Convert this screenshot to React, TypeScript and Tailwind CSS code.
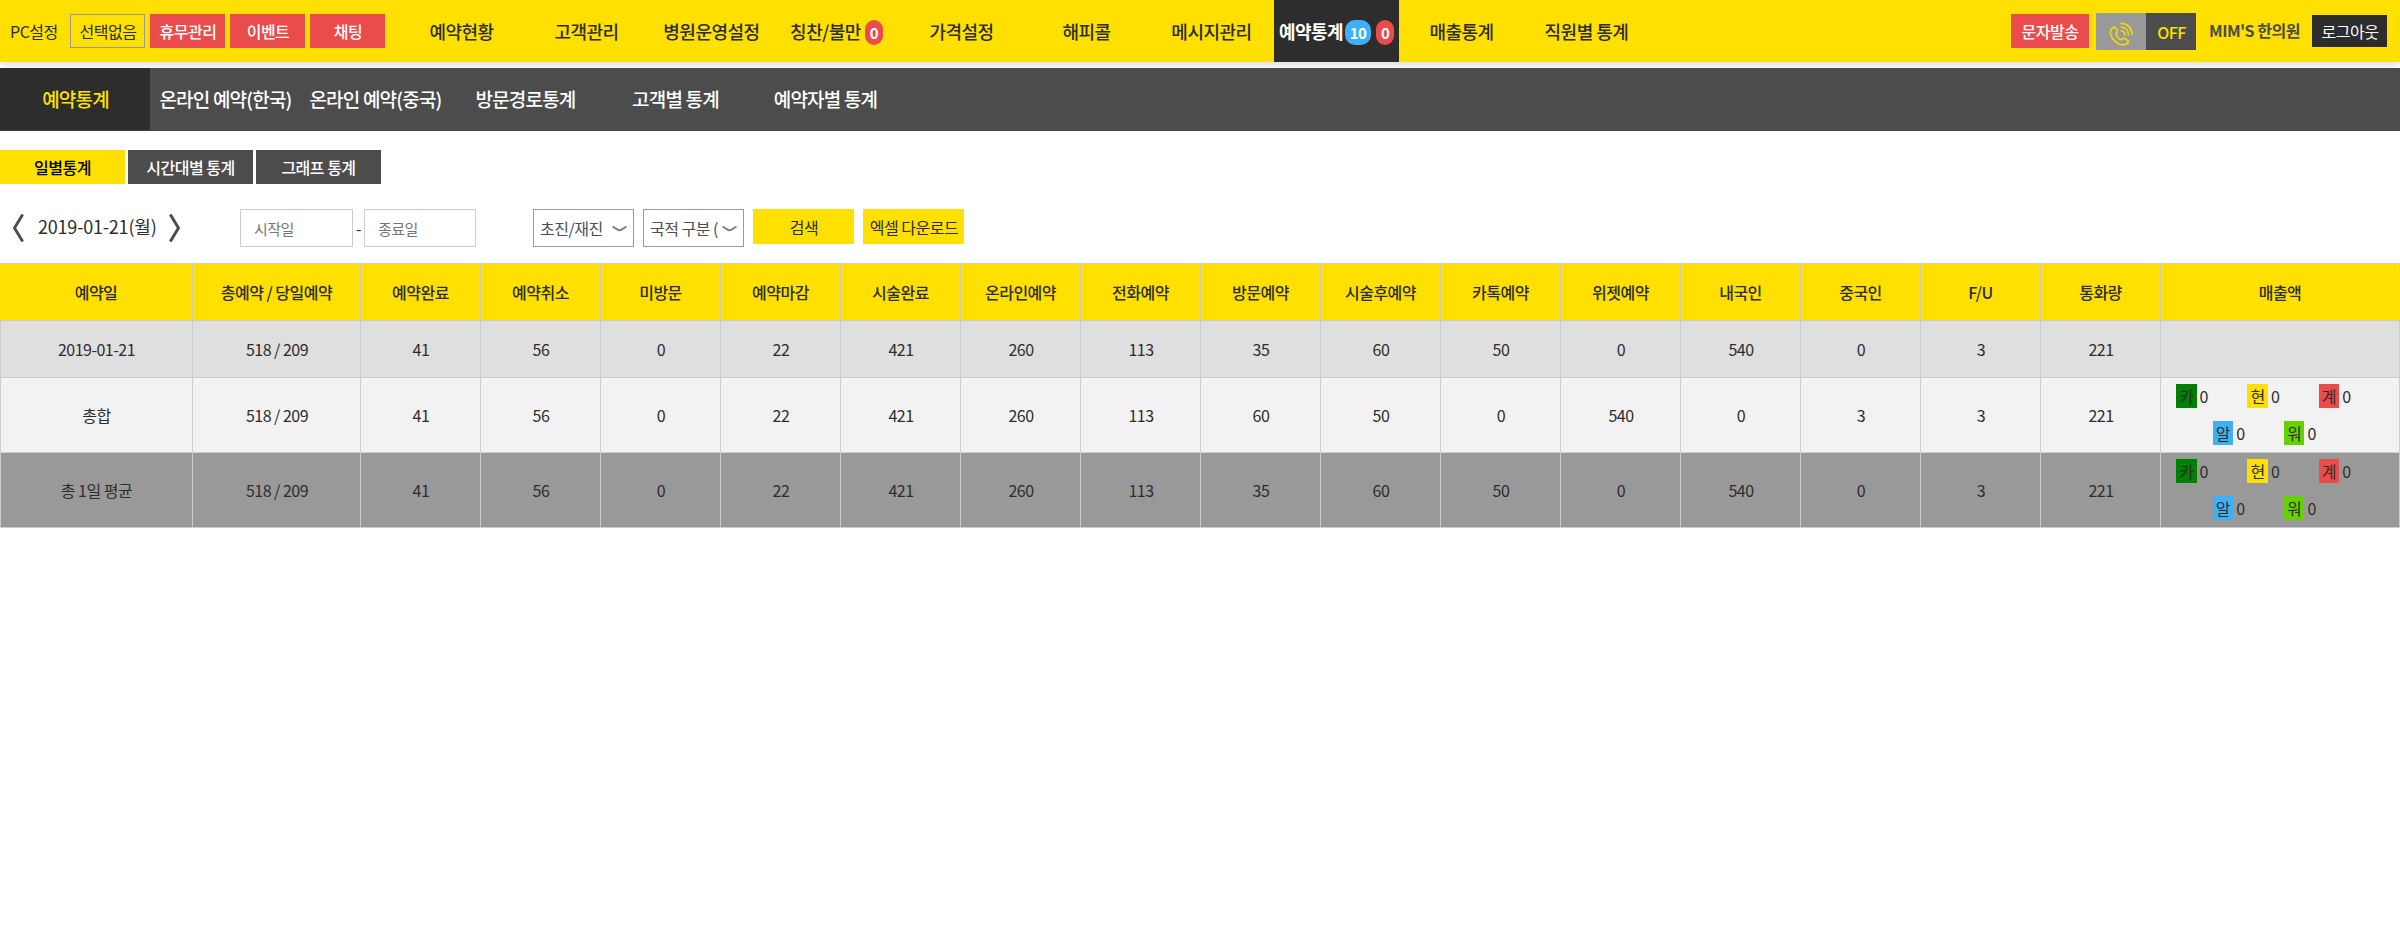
import React from "react";

const navItems: { label: string; badges?: { text: string; tone: "red" | "blue" }[]; active?: boolean }[] = [
  { label: "예약현황" },
  { label: "고객관리" },
  { label: "병원운영설정" },
  { label: "칭찬/불만", badges: [{ text: "0", tone: "red" }] },
  { label: "가격설정" },
  { label: "해피콜" },
  { label: "메시지관리" },
  { label: "예약통계", badges: [{ text: "10", tone: "blue" }, { text: "0", tone: "red" }], active: true },
  { label: "매출통계" },
  { label: "직원별 통계" },
];

const subItems = ["예약통계", "온라인 예약(한국)", "온라인 예약(중국)", "방문경로통계", "고객별 통계", "예약자별 통계"];
const tabs = ["일별통계", "시간대별 통계", "그래프 통계"];

const columns = [
  "예약일", "총예약 / 당일예약", "예약완료", "예약취소", "미방문", "예약마감", "시술완료", "온라인예약", "전화예약",
  "방문예약", "시술후예약", "카톡예약", "위젯예약", "내국인", "중국인", "F/U", "통화량", "매출액",
];

const rows = [
  {
    tone: "h-[57px] bg-[#dfdfdf]",
    sales: false,
    cells: ["2019-01-21", "518 / 209", "41", "56", "0", "22", "421", "260", "113", "35", "60", "50", "0", "540", "0", "3", "221"],
  },
  {
    tone: "h-[75px] bg-[#f2f2f2]",
    sales: true,
    cells: ["총합", "518 / 209", "41", "56", "0", "22", "421", "260", "113", "60", "50", "0", "540", "0", "3", "3", "221"],
  },
  {
    tone: "h-[75px] bg-[#999999]",
    sales: true,
    cells: ["총 1일 평균", "518 / 209", "41", "56", "0", "22", "421", "260", "113", "35", "60", "50", "0", "540", "0", "3", "221"],
  },
];

function Badge({ text, tone }: { text: string; tone: "red" | "blue" }) {
  return (
    <span
      className={
        "flex h-[25px] items-center justify-center rounded-[10px] text-[15px] font-bold text-white " +
        (tone === "red" ? "w-[18px] bg-[#ea4b4b]" : "w-[26px] bg-[#3fb0f5]")
      }
    >
      {text}
    </span>
  );
}

function PhoneIcon() {
  return (
    <svg width="24" height="24" viewBox="0 0 24 24" fill="none" stroke="#f0d60f" strokeWidth="1.700" strokeLinecap="round" strokeLinejoin="round">
      <path d="M4.300 5.500C1 7.500 0.500 11.500 3 15.800C6.200 20.800 11.500 24 16 22.600C18.600 21.800 20.200 20.200 19 18.800C17.800 17.600 16.600 16.700 15.300 16.200C13.700 15.700 13.300 17.900 11.900 17.500C9.700 16.800 7.400 14.200 7.100 12.200C6.900 10.800 8.800 10.700 8.400 9.200C8 7.900 7.200 6.600 6.300 5.700C5.700 5.100 5 5.100 4.300 5.500Z" />
      <path d="M12.300 8.800C14.600 9 15.800 10.400 15.800 12.800" />
      <path d="M12 5.100C16.600 5.100 19.400 8.200 19.400 12.800" />
      <path d="M12 1.400C18.600 1.400 23 6 23 12.500" />
    </svg>
  );
}

function SalesItem({ label, tone }: { label: string; tone: string }) {
  return (
    <div className="flex w-[71.3px] items-center">
      <span className={"flex h-6 w-[20.6px] items-center justify-center " + tone}>{label}</span>
      <span className="ml-[3px]">0</span>
    </div>
  );
}

function Sales() {
  return (
    <div className="flex flex-col gap-[13px] pb-[1px]">
      <div className="flex pl-[15px]">
        <SalesItem label="카" tone="bg-[#008000]" />
        <SalesItem label="현" tone="bg-[#ffe000]" />
        <SalesItem label="계" tone="bg-[#ea4b4b]" />
      </div>
      <div className="flex pl-[51.6px]">
        <SalesItem label="알" tone="bg-[#3fb0f5]" />
        <SalesItem label="워" tone="bg-[#66d100]" />
      </div>
    </div>
  );
}

function SelectBox({ label }: { label: string }) {
  return (
    <button className="flex h-[38px] w-[101px] items-center border border-[#999999] pl-[6px] text-[#495057]">
      <span className="w-[69px] overflow-hidden pb-[1px] text-left whitespace-nowrap">{label}</span>
      <svg className="mt-[1px] ml-[3px]" width="15" height="8" viewBox="0 0 15 8" fill="none" stroke="#808080" strokeWidth="2">
        <path d="M0.500 1.500L5.500 4.600Q7.500 5.800 9.500 4.600L14.500 1.500" />
      </svg>
    </button>
  );
}

export default function App() {
  return (
    <div className="min-h-[942px] w-[2400px] bg-white font-['Noto_Sans_CJK_KR','Noto_Sans',sans-serif] text-[16px] leading-6 tracking-[-0.5px] text-[#2d2d2d]">
      <header className="relative flex h-[62px] items-start bg-[#ffe000] whitespace-nowrap shadow-[0_2px_10px_rgba(0,0,40,0.16)]">
        <div className="flex w-[399px] items-center pt-[14px] pl-[10px]">
          <span className="w-[60px]">PC설정</span>
          <div className="flex gap-[5px]">
            <button className="h-[34px] w-[75px] border border-[#999999] pl-[1px]">선택없음</button>
            <button className="h-[34px] w-[75px] bg-[#ea4b4b] pl-[1px] font-medium text-white">휴무관리</button>
            <button className="h-[34px] w-[75px] bg-[#ea4b4b] pl-[1px] font-medium text-white">이벤트</button>
            <button className="h-[34px] w-[75px] bg-[#ea4b4b] pl-[1px] font-medium text-white">채팅</button>
          </div>
        </div>
        <nav className="flex h-full">
          {navItems.map((item) => (
            <a
              key={item.label}
              className={
                "flex w-[125px] items-center justify-center text-[18px] " +
                (item.active ? "bg-[#2d2d2d] font-bold text-white" : "font-medium")
              }
            >
              {item.label}
              {item.badges && (
                <span className={"mt-[3px] flex gap-[5px] " + (item.active ? "ml-[2px]" : "ml-[4px]")}>
                  {item.badges.map((b) => (
                    <Badge key={b.text} text={b.text} tone={b.tone} />
                  ))}
                </span>
              )}
            </a>
          ))}
        </nav>
        <div className="ml-auto flex h-[62px] items-center pr-[13px]">
          <button className="h-[34px] w-[78px] bg-[#ea4b4b] font-medium text-white">문자발송</button>
          <div className="mt-[1px] ml-[7px] flex h-[37px]">
            <span className="flex w-[50px] items-center justify-center bg-[#999999] pt-1">
              <PhoneIcon />
            </span>
            <span className="flex w-[50px] items-center justify-center bg-[#4c4c4c] pl-[1px] font-medium text-[#ffe000]">OFF</span>
          </div>
          <span className="ml-[13px] w-[103px] pb-[2px] font-bold text-[#4c4c4c]">MIM'S 한의원</span>
          <button className="h-8 w-[75px] bg-[#2d2d2d] pl-[1px] text-white">로그아웃</button>
        </div>
      </header>

      <nav className="relative mt-[6px] flex h-[63px] border-b border-[#444444] bg-[#4c4c4c] text-[19px] font-medium tracking-[-0.8px] whitespace-nowrap text-white">
        {subItems.map((item, i) => (
          <a
            key={item}
            className={"flex w-[150px] items-center justify-center pl-[1px] " + (i === 0 ? "bg-[#2d2d2d] text-[#ffe000]" : "")}
          >
            {item}
          </a>
        ))}
      </nav>

      <div className="mt-[19px] flex gap-[3px] font-medium">
        {tabs.map((tab, i) => (
          <button key={tab} className={"h-[34px] w-[125px] " + (i === 0 ? "bg-[#ffe000] text-black" : "bg-[#4c4c4c] text-white")}>
            {tab}
          </button>
        ))}
      </div>

      <div className="mt-[25px] flex h-[38px] items-start whitespace-nowrap">
        <div className="flex h-full w-[240px] items-center pl-[12px]">
          <svg width="12" height="30" viewBox="0 0 12 30" fill="none" stroke="#4c4c4c" strokeWidth="2.900">
            <path d="M10.700 1.500L2.500 15L10.700 28.500" />
          </svg>
          <span className="mt-[-5px] ml-[14px] w-[131px] text-[18px] tracking-[-0.2px]">2019-01-21(월)</span>
          <svg width="12" height="30" viewBox="0 0 12 30" fill="none" stroke="#4c4c4c" strokeWidth="2.900">
            <path d="M1.300 1.500L9.500 15L1.300 28.500" />
          </svg>
        </div>
        <input className="h-[38px] w-[113px] border border-[#cccccc] px-[13px] text-[15px] placeholder:text-[#757575]" placeholder="시작일" />
        <span className="w-[11px] pt-[7px] text-center">-</span>
        <input className="h-[38px] w-[112px] border border-[#cccccc] px-[13px] text-[15px] placeholder:text-[#757575]" placeholder="종료일" />
        <div className="ml-[57px] flex items-start gap-[9px]">
          <SelectBox label="초진/재진" />
          <SelectBox label="국적 구분 (" />
          <button className="h-[35px] w-[101px] bg-[#ffe000] pl-[1px]">검색</button>
          <button className="h-[35px] w-[101px] bg-[#ffe000] pl-[1px]">엑셀 다운로드</button>
        </div>
      </div>

      <table className="mt-4 w-[2400px] table-fixed border-separate border-spacing-0 text-center">
        <colgroup>
          <col className="w-[193px]" />
          <col className="w-[168px]" />
          <col span={15} className="w-[120px]" />
          <col className="w-[239px]" />
        </colgroup>
        <thead>
          <tr className="h-[58px] bg-[#ffe000]">
            {columns.map((c) => (
              <th key={c} className="border-t border-r border-b border-[#cccccc] p-0 font-medium">
                {c}
              </th>
            ))}
          </tr>
        </thead>
        <tbody>
          {rows.map((row) => (
            <tr key={row.cells[0]} className={row.tone}>
              {row.cells.map((cell, i) => (
                <td key={i} className="border-r border-b border-[#cccccc] p-0 pl-[1px] first:border-l first:pl-0">
                  {cell}
                </td>
              ))}
              <td className="border-r border-b border-[#cccccc] p-0">{row.sales && <Sales />}</td>
            </tr>
          ))}
        </tbody>
      </table>
    </div>
  );
}
